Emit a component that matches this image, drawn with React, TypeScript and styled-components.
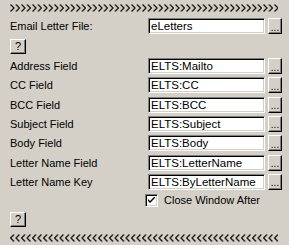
import React from 'react';
import styled, { createGlobalStyle } from 'styled-components';

const GlobalStyle = createGlobalStyle`
    html, body {
        margin: 0;
        padding: 0;
        background: #d4d0c8;
    }
    body {
        font-family: 'Liberation Sans', Arial, sans-serif;
        font-size: 11px;
        color: #000;
    }
`;

const Panel = styled.div`
    width: 289px;
    height: 245px;
    box-sizing: border-box;
    padding: 4px 10px 0 10px;
    display: flex;
    flex-direction: column;
`;

const Divider = styled.svg<{ $gap: number }>`
    display: block;
    width: 268px;
    height: 8px;
    margin-top: ${(p) => p.$gap}px;
`;

const Row = styled.div<{ $gap: number }>`
    display: grid;
    grid-template-columns: 135px 117px 14px;
    column-gap: 3px;
    align-items: center;
    height: 16px;
    margin-top: ${(p) => p.$gap}px;
`;

const Label = styled.span`
    white-space: nowrap;
    line-height: 16px;
`;

const TextBox = styled.div`
    height: 16px;
    box-sizing: border-box;
    background: #fff;
    border: 1px solid;
    border-color: #808080 #fff #fff #808080;
    box-shadow: inset 1px 1px #000, inset -1px -1px #d4d0c8;
    padding: 0 2px;
    font-size: 11.5px;
    line-height: 14px;
    white-space: nowrap;
    overflow: hidden;
`;

const RaisedButton = styled.div<{ $w: number; $h: number }>`
    width: ${(p) => p.$w}px;
    height: ${(p) => p.$h}px;
    box-sizing: border-box;
    background: #d4d0c8;
    border: 1px solid;
    border-color: #fff #000 #000 #fff;
    box-shadow: inset -1px -1px #808080;
    display: flex;
    align-items: center;
    justify-content: center;
    font-size: 11px;
    line-height: 1;
`;

const Dots = styled.span`
    margin-top: 3px;
    font-size: 10px;
`;

const HelpWrap = styled.div<{ $gap: number }>`
    margin-top: ${(p) => p.$gap}px;
`;

const CheckRow = styled.div`
    display: flex;
    align-items: center;
    gap: 6px;
    margin-top: 4px;
    margin-left: 135px;
    height: 13px;
`;

const CheckBox = styled.div`
    width: 13px;
    height: 13px;
    box-sizing: border-box;
    background: #fff;
    border: 1px solid;
    border-color: #808080 #fff #fff #808080;
    box-shadow: inset 1px 1px #000, inset -1px -1px #d4d0c8;
    display: flex;
    align-items: center;
    justify-content: center;
`;

const Chevrons: React.FC<{ dir: 'right' | 'left'; gap: number }> = ({ dir, gap }) => {
    const id = `chev-${dir}`;
    const d = dir === 'right' ? 'M0.5 0.5 L4 4 L0.5 7.5' : 'M4 0.5 L0.5 4 L4 7.5';
    return (
        <Divider $gap={gap} viewBox="0 0 268 8">
            <defs>
                <pattern id={id} width="5.5" height="8" patternUnits="userSpaceOnUse">
                    <path d={d} fill="none" stroke="#000" strokeWidth="1.1" />
                </pattern>
            </defs>
            <rect width="268" height="8" fill={`url(#${id})`} />
        </Divider>
    );
};

const fields: [string, string][] = [
    ['Address Field', 'ELTS:Mailto'],
    ['CC Field', 'ELTS:CC'],
    ['BCC Field', 'ELTS:BCC'],
    ['Subject Field', 'ELTS:Subject'],
    ['Body Field', 'ELTS:Body'],
    ['Letter Name Field', 'ELTS:LetterName'],
    ['Letter Name Key', 'ELTS:ByLetterName'],
];

const BrowseButton = () => (
    <RaisedButton $w={14} $h={16}>
        <Dots>...</Dots>
    </RaisedButton>
);

const HelpButton = ({ gap }: { gap: number }) => (
    <HelpWrap $gap={gap}>
        <RaisedButton $w={16} $h={15}>?</RaisedButton>
    </HelpWrap>
);

const App: React.FC = () => {
    return (
        <>
            <GlobalStyle />
            <Panel>
                <Chevrons dir="right" gap={0} />
                <Row $gap={6}>
                    <Label>Email Letter File:</Label>
                    <TextBox>eLetters</TextBox>
                    <BrowseButton />
                </Row>
                <HelpButton gap={5} />
                {fields.map(([label, value], i) => (
                    <Row key={label} $gap={i === 0 ? 4 : 3.33}>
                        <Label>{label}</Label>
                        <TextBox>{value}</TextBox>
                        <BrowseButton />
                    </Row>
                ))}
                <CheckRow>
                    <CheckBox>
                        <svg width="7" height="7" viewBox="0 0 7 7">
                            <path d="M0 2 L0 4 L2 6 L7 1 L7 -1 L2 4 Z" fill="#000" />
                        </svg>
                    </CheckBox>
                    <Label>Close Window After</Label>
                </CheckRow>
                <HelpButton gap={5} />
                <Chevrons dir="left" gap={7} />
            </Panel>
        </>
    );
};

export default App;
